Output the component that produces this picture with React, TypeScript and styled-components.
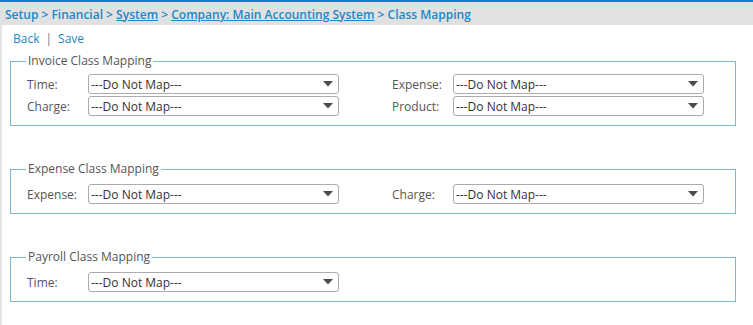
import React from "react";
import styled, { createGlobalStyle } from "styled-components";

const GlobalStyle = createGlobalStyle`
  html, body { margin: 0; padding: 0; background: #fff; }
  body { font-family: "Open Sans", "DejaVu Sans", sans-serif; }
  * { box-sizing: border-box; }
`;

const Page = styled.div`
  width: 753px;
  height: 325px;
  display: flex;
  flex-direction: column;
  overflow: hidden;
`;

const Header = styled.div`
  border-top: 2px solid #0b84c6;
  background: #e1e1e1;
  height: 25px;
  padding: 1px 0 0 5px;
  display: flex;
  align-items: center;
  font-size: 12px;
  font-weight: 600;
  color: #1a88c9;
  white-space: pre;
`;

const Crumb = styled.span<{ $link?: boolean }>`
  text-decoration: ${(p) => (p.$link ? "underline" : "none")};
`;

const Body = styled.div`
  flex: 1;
  border-left: 2px solid #e4e4e4;
  display: flex;
  flex-direction: column;
`;

const Toolbar = styled.div`
  display: flex;
  align-items: center;
  gap: 6px;
  height: 16px;
  margin: 5px 0 0 11px;
  font-size: 12px;
  color: #1a88c9;
`;

const Divider = styled.span`
  color: #777;
`;

const Group = styled.fieldset<{ $top: number; $pad: number }>`
  margin: ${(p) => p.$top}px 17px 0 8px;
  border: 1px solid #7fb6d2;
  padding: ${(p) => p.$pad}px 16px 9px 16px;
  min-width: 0;
`;

const Legend = styled.legend`
  font-size: 12px;
  line-height: 16px;
  color: #555;
  padding: 0 2px;
  margin-left: -1px;
`;

const Grid = styled.div`
  display: grid;
  grid-template-columns: 61px 251px 53px 61px 251px;
  grid-auto-rows: 20px;
  row-gap: 2px;
  align-items: center;
`;

const Label = styled.span<{ $col: number }>`
  grid-column: ${(p) => p.$col};
  font-size: 12px;
  color: #555;
`;

const Select = styled.div<{ $col: number }>`
  grid-column: ${(p) => p.$col};
  height: 20px;
  border: 1px solid #ababab;
  border-radius: 3px;
  display: flex;
  align-items: center;
  justify-content: space-between;
  padding: 0 5px 0 2px;
  font-size: 12px;
  color: #333;
  background: #fff;
`;

const Arrow = () => (
  <svg width="10" height="6" viewBox="0 0 10 6">
    <polygon points="0,0 10,0 5,5.5" fill="#4a4a4a" />
  </svg>
);

const Row = ({ label, col }: { label: string; col: number }) => (
  <>
    <Label $col={col}>{label}</Label>
    <Select $col={col + 1}>
      <span>---Do Not Map---</span>
      <Arrow />
    </Select>
  </>
);

const groups: { title: string; top: number; pad: number; rows: [string, string?][] }[] = [
  { title: "Invoice Class Mapping", top: 7, pad: 5, rows: [["Time:", "Expense:"], ["Charge:", "Product:"]] },
  { title: "Expense Class Mapping", top: 35, pad: 7, rows: [["Expense:", "Charge:"]] },
  { title: "Payroll Class Mapping", top: 35, pad: 7, rows: [["Time:"]] },
];

export default function App() {
  return (
    <Page>
      <GlobalStyle />
      <Header>
        <Crumb>Setup &gt; Financial &gt; </Crumb>
        <Crumb $link>System</Crumb>
        <Crumb> &gt; </Crumb>
        <Crumb $link>Company: Main Accounting System</Crumb>
        <Crumb> &gt; Class Mapping</Crumb>
      </Header>
      <Body>
        <Toolbar>
          <span>Back</span>
          <Divider>|</Divider>
          <span>Save</span>
        </Toolbar>
        {groups.map((g) => (
          <Group key={g.title} $top={g.top} $pad={g.pad}>
            <Legend>{g.title}</Legend>
            <Grid>
              {g.rows.map(([l, r], i) => (
                <React.Fragment key={i}>
                  <Row label={l} col={1} />
                  {r && <Row label={r} col={4} />}
                </React.Fragment>
              ))}
            </Grid>
          </Group>
        ))}
      </Body>
    </Page>
  );
}
